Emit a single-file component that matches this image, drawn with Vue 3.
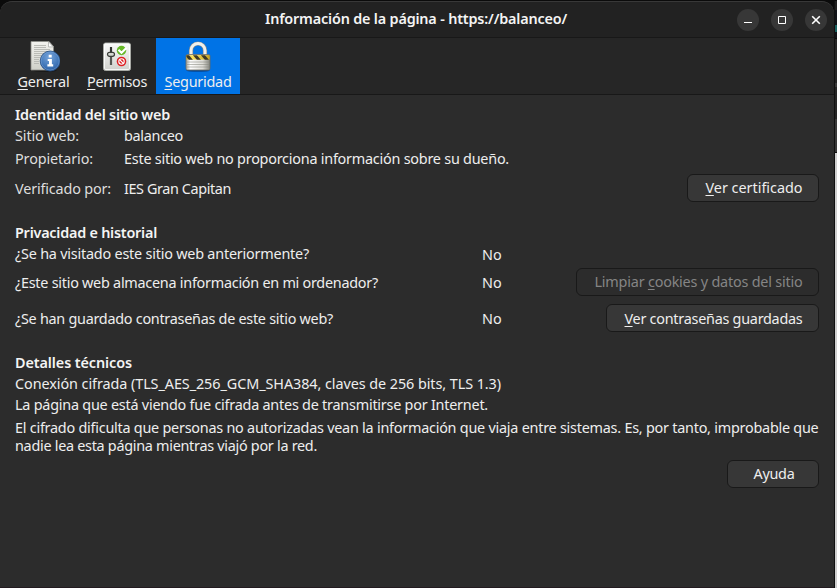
<script setup>
// Spreads or tightens the letters so that a label fills its design width.
const vFit = {
  mounted(el, { value }) {
    const natural = el.getBoundingClientRect().width
    const count = el.textContent.length
    el.style.letterSpacing = `${(value - natural) / count}px`
  },
}

const identity = [
  { label: 'Sitio web:', lw: 64, value: 'balanceo', vw: 59 },
  { label: 'Propietario:', lw: 78, value: 'Este sitio web no proporciona información sobre su dueño.', vw: 385 },
  { label: 'Verificado por:', lw: 96, value: 'IES Gran Capitan', vw: 107 },
]
</script>

<template>
  <div class="desktop">
    <main class="window">
      <header class="titlebar">
        <h1><span v-fit="302">Información de la página - https://balanceo/</span></h1>
        <div class="controls">
          <button aria-label="Minimizar"><svg viewBox="0 0 22 22"><path d="M7 13.5h8" /></svg></button>
          <button aria-label="Maximizar"><svg viewBox="0 0 22 22"><path d="M7.5 7.5h7v7h-7z" /></svg></button>
          <button aria-label="Cerrar"><svg viewBox="0 0 22 22"><path d="M7.2 7.2l7.6 7.6M14.8 7.2l-7.6 7.6" class="cross" /></svg></button>
        </div>
      </header>

      <nav class="toolbar">
        <a class="tab general">
          <svg class="icon" viewBox="0 0 32 32">
            <defs>
              <linearGradient id="paper" x1="0" y1="0" x2="0" y2="1"><stop offset="0" stop-color="#f3f3ef" /><stop offset="1" stop-color="#cfd0c9" /></linearGradient>
              <radialGradient id="info" cx=".45" cy=".3" r=".8"><stop offset="0" stop-color="#76a4da" /><stop offset=".65" stop-color="#3d73b6" /><stop offset="1" stop-color="#234e8d" /></radialGradient>
            </defs>
            <ellipse cx="17" cy="30.6" rx="12" ry="1.3" fill="#111" opacity=".6" />
            <path d="M3 1.5h18l4.5 5v23.5H3z" fill="url(#paper)" stroke="#8d8e89" stroke-width=".8" />
            <path d="M20.5 1.8v5.1h4.7z" fill="#fff" stroke="#a4a5a0" stroke-width=".7" />
            <path d="M6 5.5h12M6 7.5h12M6 9.5h16M6 11.5h16M6 13.5h13M6 15.5h8M6 17.5h6M6 19.5h5M6 21.5h5M6 23.5h5" stroke="#b4b5b0" stroke-width=".9" />
            <circle cx="22.2" cy="21" r="10" fill="url(#info)" stroke="#234c83" stroke-width=".8" />
            <circle cx="22.2" cy="21" r="9" fill="none" stroke="#7ca7da" stroke-width=".7" opacity=".7" />
            <path d="M20.7 14.8h3v2.8h-3zM19.7 19h4.2v5.3h1.3v2.1h-5.8v-2.1h1.6v-3.2h-1.3z" fill="#fff" />
          </svg>
          <span v-fit="52"><u>G</u>eneral</span>
        </a>
        <a class="tab permissions">
          <svg class="icon" viewBox="0 0 32 32">
            <defs><linearGradient id="panel" x1="0" y1="0" x2="0" y2="1"><stop offset="0" stop-color="#fafafa" /><stop offset="1" stop-color="#d1d1cd" /></linearGradient></defs>
            <rect x="2.5" y="3" width="27" height="27.5" rx="2" fill="url(#panel)" stroke="#a8aaa5" />
            <rect x="3.5" y="4" width="25" height="25.5" rx="1.3" fill="none" stroke="#fff" stroke-width=".8" />
            <path d="M10 7v18" stroke="#555753" stroke-width="2.2" />
            <path d="M10 7v6" stroke="#252825" stroke-width="1.4" />
            <rect x="6.5" y="12.3" width="7" height="4" rx="2" fill="#d4d7d1" stroke="#3b3e3a" stroke-width="1.2" />
            <circle cx="20.5" cy="10.5" r="4.7" fill="#66b827" />
            <path d="M17.5 9.7l3 3 5.1-5" fill="none" stroke="#fff" stroke-width="2.1" />
            <circle cx="20.5" cy="21.5" r="4.8" fill="#de2024" />
            <circle cx="20.5" cy="21.5" r="2.7" fill="none" stroke="#fff" stroke-width="1.1" />
            <path d="M18.6 19.6l3.8 3.8" stroke="#fff" stroke-width="1.2" />
          </svg>
          <span v-fit="60"><u>P</u>ermisos</span>
        </a>
        <a class="tab security active">
          <svg class="icon" viewBox="0 0 32 32">
            <defs>
              <linearGradient id="steel"><stop offset="0" stop-color="#a3a49c" /><stop offset=".18" stop-color="#fff" /><stop offset=".7" stop-color="#dddcd6" /><stop offset="1" stop-color="#84857e" /></linearGradient>
              <linearGradient id="gold"><stop offset="0" stop-color="#c6a522" /><stop offset=".25" stop-color="#f9e15b" /><stop offset="1" stop-color="#c6a41c" /></linearGradient>
              <clipPath id="band"><path d="M4.4 15.2h23.2v4.6H4.4z" /></clipPath>
            </defs>
            <ellipse cx="16" cy="30.6" rx="12" ry="1.2" fill="#092e65" opacity=".65" />
            <path d="M9 16v-5.5a7 7 0 0 1 14 0V16" fill="none" stroke="#8b8c88" stroke-width="4.2" />
            <path d="M9 16v-5.5a7 7 0 0 1 14 0V16" fill="none" stroke="#f0f0ec" stroke-width="3" />
            <rect x="4" y="14.5" width="24" height="15.5" rx="1.5" fill="url(#steel)" stroke="#696a63" stroke-width=".8" />
            <path d="M5 22h22M5 24.5h22M5 27h22" stroke="#888980" stroke-width=".8" opacity=".7" />
            <g clip-path="url(#band)">
              <path d="M4 14.5h24v5.3H4z" fill="url(#gold)" />
              <path d="M2 14l5 6h4l-5-6zM10 14l5 6h4l-5-6zM18 14l5 6h4l-5-6z" fill="#3b3828" />
            </g>
          </svg>
          <span v-fit="67"><u>S</u>eguridad</span>
        </a>
      </nav>

      <div class="content">
        <section class="identity">
          <h2><span v-fit="155">Identidad del sitio web</span></h2>
          <template v-for="row in identity" :key="row.label">
            <div class="label"><span v-fit="row.lw">{{ row.label }}</span></div>
            <div><span v-fit="row.vw">{{ row.value }}</span></div>
          </template>
          <button class="btn certificate"><span v-fit="97"><u>V</u>er certificado</span></button>
        </section>

        <section class="privacy">
          <h2><span v-fit="142">Privacidad e historial</span></h2>
          <div><span v-fit="294">¿Se ha visitado este sitio web anteriormente?</span></div>
          <div class="visited"><span v-fit="20">No</span></div>
          <div></div>
          <div><span v-fit="363">¿Este sitio web almacena información en mi ordenador?</span></div>
          <div><span v-fit="20">No</span></div>
          <button class="btn cookies" disabled><span v-fit="208">Limpiar <u>c</u>ookies y datos del sitio</span></button>
          <div><span v-fit="318">¿Se han guardado contraseñas de este sitio web?</span></div>
          <div><span v-fit="20">No</span></div>
          <button class="btn passwords"><span v-fit="178"><u>V</u>er contraseñas guardadas</span></button>
        </section>

        <section class="technical">
          <h2><span v-fit="117">Detalles técnicos</span></h2>
          <p class="cipher"><span v-fit="486">Conexión cifrada (TLS_AES_256_GCM_SHA384, claves de 256 bits, TLS 1.3)</span></p>
          <p class="page"><span v-fit="473">La página que está viendo fue cifrada antes de transmitirse por Internet.</span></p>
          <p class="explain">
            <span v-fit="803.5">El cifrado dificulta que personas no autorizadas vean la información que viaja entre sistemas. Es, por tanto, improbable que</span><br />
            <span v-fit="302">nadie lea esta página mientras viajó por la red.</span>
          </p>
          <button class="btn help"><span v-fit="41">Ayuda</span></button>
        </section>
      </div>
    </main>
    <aside class="behind">
      <div class="behind-title"></div>
      <div class="behind-bar"></div>
      <div class="behind-page"></div>
    </aside>
  </div>
</template>

<style>
body {
  background: #0b0b0b;
  overflow: hidden;
}
</style>

<style scoped>
* {
  box-sizing: border-box;
}
.desktop {
  display: flex;
  width: 837px;
  height: 588px;
  padding-top: 1px;
  background: #0b0b0b;
  color: #eee;
  font: 14.4px/18px "Noto Sans", "Open Sans", sans-serif;
}
.window {
  width: 834px;
  height: 587px;
  background: #2c2c2c;
  border-bottom: 1px solid #231b20;
  border-radius: 12px 12px 0 0;
  overflow: hidden;
}
span {
  white-space: nowrap;
}
u {
  text-decoration: underline 1px;
  text-underline-offset: 2px;
  text-decoration-skip-ink: none;
}
h1, h2, p {
  margin: 0;
  font-size: inherit;
}
h1, h2 {
  font-weight: 600;
  color: #f4f4f4;
}
.titlebar {
  display: grid;
  grid-template-columns: 1fr auto;
  align-items: center;
  height: 37px;
  padding: 0 7px 0 265px;
  background: #222;
  border-top: 1px solid #383838;
  border-bottom: 1px solid #181818;
  border-radius: 12px 12px 0 0;
}
.titlebar h1 {
  line-height: 20px;
  padding-bottom: 1px;
}
.controls {
  display: flex;
  gap: 12px;
}
.controls button {
  display: grid;
  place-items: center;
  width: 22px;
  height: 22px;
  padding: 0;
  border: 0;
  border-radius: 50%;
  background: #373737;
}
.controls svg {
  display: block;
  width: 22px;
  height: 22px;
  fill: none;
  stroke: #fff;
  stroke-width: 1;
}
.controls .cross {
  stroke-width: 1.6;
}
.toolbar {
  display: flex;
  height: 57px;
  padding-left: 9px;
  background: #262626;
  border-bottom: 1px solid #181818;
}
.tab {
  display: flex;
  flex-direction: column;
  align-items: center;
  height: 56px;
  padding-top: 2px;
}
.tab .icon {
  width: 32px;
  height: 32px;
  flex: none;
}
.tab span {
  line-height: 20px;
}
.general {
  width: 69px;
}
.permissions {
  width: 78px;
}
.security {
  width: 84px;
}
.active {
  background: #0073e6;
}
.content {
  padding: 10px 15px 0;
}
.identity {
  display: grid;
  grid-template-columns: 109px 1fr 132px;
  grid-template-rows: 20px 22px 24px 36px;
  align-items: center;
}
.identity h2,
.privacy h2 {
  grid-column: 1 / -1;
}
.label {
  grid-column: 1;
  color: #dedede;
}
.privacy {
  display: grid;
  grid-template-columns: 467px 1fr auto;
  grid-template-rows: 22px 20px 38px 34px;
  align-items: center;
  margin-top: 15px;
}
.visited {
  padding-top: 2px;
}
.technical {
  display: flex;
  flex-direction: column;
  margin-top: 17px;
}
.technical h2 {
  line-height: 20px;
}
.cipher {
  line-height: 22px;
}
.page {
  line-height: 20px;
}
.explain {
  margin-top: 4px;
}
.btn {
  display: grid;
  place-items: center;
  justify-self: end;
  height: 28px;
  padding: 0 0 0 2px;
  border: 1px solid #191919;
  border-radius: 6px;
  background: #373737;
  color: inherit;
  font: inherit;
}
.btn:disabled {
  background: #2c2c2c;
  color: #858585;
}
.certificate {
  grid-column: 3;
  grid-row: 4;
  width: 132px;
  margin-bottom: 2px;
}
.cookies {
  width: 243px;
  margin-bottom: 2px;
}
.passwords {
  width: 213px;
  margin-bottom: 2px;
  padding-top: 2px;
}
.help {
  align-self: flex-end;
  width: 92px;
  margin-top: 5px;
}
.behind {
  display: flex;
  flex-direction: column;
  width: 3px;
  border-left: 1px solid #101010;
}
.behind-title {
  height: 37px;
  background: linear-gradient(#202020 0 9px, #111318 9px 24px, #18605f 24px 31px, #111318 31px);
}
.behind-bar {
  height: 115px;
  background: linear-gradient(#090909 0 1px, #242424 1px 45px, #3a3a3a 45px 49px, #252525 49px 81px, #383838 81px 114px, #111 114px);
}
.behind-page {
  flex: 1;
  background: #cfcfcf;
}
</style>
